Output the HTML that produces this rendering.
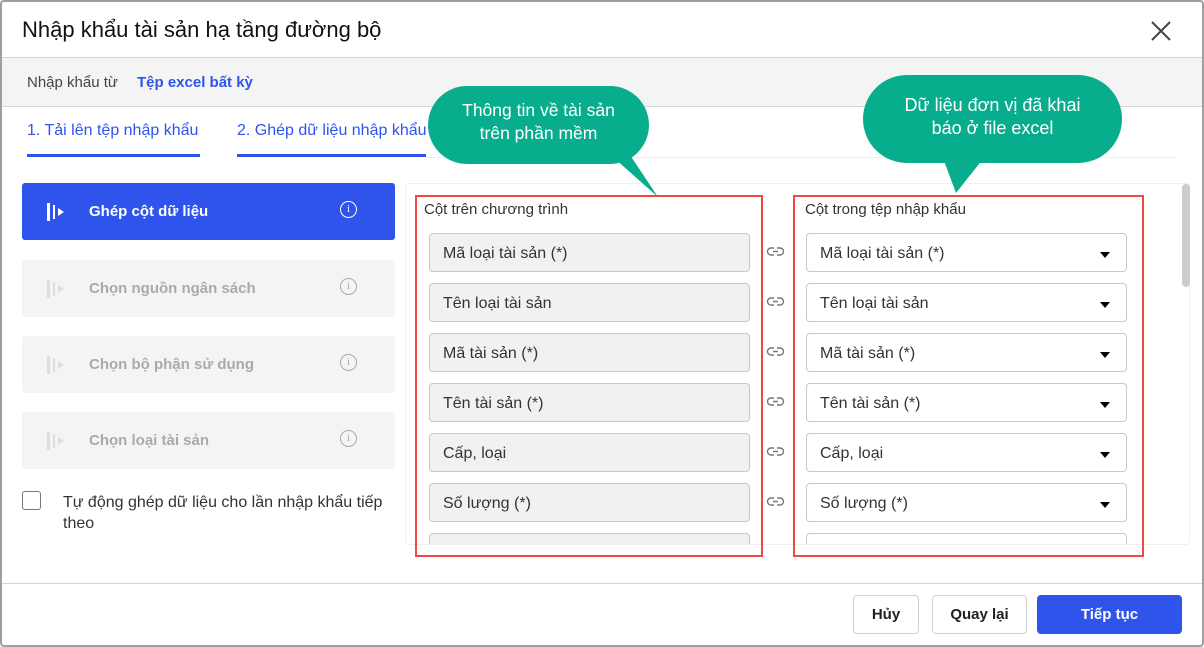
<!DOCTYPE html>
<html><head><meta charset="utf-8"><style>
*{box-sizing:border-box;margin:0;padding:0}
body{width:1204px;height:647px;overflow:hidden;background:#fff;font-family:"Liberation Sans",Roboto,sans-serif;position:relative;color:#212121}
.frame{position:absolute;left:0;top:0;width:1204px;height:647px;border:2px solid #9e9e9e;border-radius:4px}
.abs{position:absolute}
.title{left:22px;top:17px;font-size:22px;color:#111}
.gray{left:2px;top:57px;width:1200px;height:50px;background:#f4f4f4;border-top:1px solid #d6d6d6;border-bottom:1px solid #d6d6d6}
.tab{font-size:16px;color:#2f54eb;top:122px}
.ul{height:3px;background:#2f54eb;top:154px}
.step{left:22px;width:373px;height:57px;background:#f4f4f4;border-radius:3px;color:#aaa;font-weight:bold;font-size:15px}
.step span{position:absolute;left:67px;top:20px}
.step .ico{position:absolute;left:25px;top:19px}
.step .info{position:absolute;left:318px;top:18px;width:17px;height:17px;border:1.3px solid #aaa;border-radius:50%;font-size:11px;text-align:center;line-height:15px;font-weight:normal;font-family:"Liberation Serif",serif}
.fld{height:39px;border:1px solid #c8c8c8;border-radius:4px;font-size:16px;color:#333;padding:11px 13px 0}
.l{left:429px;width:321px;background:#f1f1f1}
.r{left:806px;width:321px;background:#fff}
.r::after{content:"";position:absolute;right:16px;top:18px;border-left:5px solid transparent;border-right:5px solid transparent;border-top:6px solid #000}
.btn{top:595px;height:39px;border:1px solid #d0d0d0;border-radius:4px;font-size:15px;font-weight:bold;text-align:center;line-height:37px;background:#fff}
.bub{background:#08ad8d;color:#fff;text-align:center;line-height:23px}
</style></head><body>
<div class="frame"></div>
<div class="abs title">Nhập khẩu tài sản hạ tầng đường bộ</div>
<svg class="abs" style="left:1151px;top:21px" width="20" height="20"><path d="M1 1L19 19M19 1L1 19" stroke="#444" stroke-width="2"/></svg>
<div class="abs gray"></div>
<div class="abs" style="left:27px;top:74px;font-size:15px;color:#444">Nhập khẩu từ</div>
<div class="abs" style="left:137px;top:74px;font-size:15px;color:#2f54eb;font-weight:bold">Tệp excel bất kỳ</div>
<div class="abs tab" style="left:27px">1. Tải lên tệp nhập khẩu</div>
<div class="abs tab" style="left:237px">2. Ghép dữ liệu nhập khẩu</div>
<div class="abs ul" style="left:27px;width:173px"></div>
<div class="abs ul" style="left:237px;width:189px"></div>
<div class="abs" style="left:426px;top:157px;width:750px;height:1px;background:#eee"></div>

<div class="abs step" style="top:183px;background:#2f54eb;color:#fff"><svg class="ico" width="22" height="20"><rect x="0" y="1" width="3" height="18" fill="#fff"/><rect x="6" y="3" width="2" height="14" fill="#fff"/><path d="M11 6L17 10L11 14Z" fill="#fff"/></svg><span>Ghép cột dữ liệu</span><div class="info" style="border-color:#fff">i</div></div>
<div class="abs step" style="top:260px"><svg class="ico" width="22" height="20"><rect x="0" y="1" width="3" height="18" fill="#ddd"/><rect x="6" y="3" width="2" height="14" fill="#ddd"/><path d="M11 6L17 10L11 14Z" fill="#ddd"/></svg><span>Chọn nguồn ngân sách</span><div class="info">i</div></div>
<div class="abs step" style="top:336px"><svg class="ico" width="22" height="20"><rect x="0" y="1" width="3" height="18" fill="#ddd"/><rect x="6" y="3" width="2" height="14" fill="#ddd"/><path d="M11 6L17 10L11 14Z" fill="#ddd"/></svg><span>Chọn bộ phận sử dụng</span><div class="info">i</div></div>
<div class="abs step" style="top:412px"><svg class="ico" width="22" height="20"><rect x="0" y="1" width="3" height="18" fill="#ddd"/><rect x="6" y="3" width="2" height="14" fill="#ddd"/><path d="M11 6L17 10L11 14Z" fill="#ddd"/></svg><span>Chọn loại tài sản</span><div class="info">i</div></div>
<div class="abs" style="left:22px;top:491px;width:19px;height:19px;border:1px solid #777;border-radius:3px"></div>
<div class="abs" style="left:63px;top:492px;font-size:16px;line-height:21px;color:#333;width:335px">Tự động ghép dữ liệu cho lần nhập khẩu tiếp theo</div>

<div class="abs" style="left:405px;top:183px;width:785px;height:362px;border:1px solid #eee;border-radius:4px"></div>
<div class="abs" style="left:1182px;top:184px;width:8px;height:103px;background:#ccc;border-radius:4px"></div>
<div class="abs" style="left:406px;top:184px;width:775px;height:360px;overflow:hidden">
 <div style="position:relative;left:-406px;top:-184px">
 <div class="abs fld l" style="top:233px">Mã loại tài sản (*)</div>
 <div class="abs fld l" style="top:283px">Tên loại tài sản</div>
 <div class="abs fld l" style="top:333px">Mã tài sản (*)</div>
 <div class="abs fld l" style="top:383px">Tên tài sản (*)</div>
 <div class="abs fld l" style="top:433px">Cấp, loại</div>
 <div class="abs fld l" style="top:483px">Số lượng (*)</div>
 <div class="abs fld l" style="top:533px"></div>
 <div class="abs fld r" style="top:233px">Mã loại tài sản (*)</div>
 <div class="abs fld r" style="top:283px">Tên loại tài sản</div>
 <div class="abs fld r" style="top:333px">Mã tài sản (*)</div>
 <div class="abs fld r" style="top:383px">Tên tài sản (*)</div>
 <div class="abs fld r" style="top:433px">Cấp, loại</div>
 <div class="abs fld r" style="top:483px">Số lượng (*)</div>
 <div class="abs fld r" style="top:533px"></div>
 </div>
</div>
<svg class="abs" style="left:766px;top:240px" width="20" height="280" fill="none" stroke="#777" stroke-width="1.4">
<g id="k"><path d="M8 8H5a3.5 3.5 0 0 0 0 7h3M11 8h3a3.5 3.5 0 0 1 0 7h-3M7 11.5h5"/></g>
<use href="#k" y="50"/><use href="#k" y="100"/><use href="#k" y="150"/><use href="#k" y="200"/><use href="#k" y="250"/>
</svg>
<div class="abs" style="left:415px;top:195px;width:348px;height:362px;border:2px solid #f04747"></div>
<div class="abs" style="left:793px;top:195px;width:351px;height:362px;border:2px solid #f04747"></div>
<div class="abs" style="left:424px;top:201px;font-size:15px;color:#333">Cột trên chương trình</div>
<div class="abs" style="left:805px;top:201px;font-size:15px;color:#333">Cột trong tệp nhập khẩu</div>

<svg class="abs" style="left:0;top:0" width="1204" height="647">
<path d="M605 150L658 197L630 155Z" fill="#08ad8d"/>
<path d="M990 150L956 193L940 150Z" fill="#08ad8d"/>
</svg>
<div class="abs bub" style="left:428px;top:86px;width:221px;height:78px;border-radius:39px;padding-top:13px;font-size:17.5px">Thông tin về tài sản<br>trên phần mềm</div>
<div class="abs bub" style="left:863px;top:75px;width:259px;height:88px;border-radius:44px;padding-top:19px;font-size:18px">Dữ liệu đơn vị đã khai<br>báo ở file excel</div>

<div class="abs" style="left:2px;top:583px;width:1200px;height:1px;background:#d6d6d6"></div>
<div class="abs btn" style="left:853px;width:66px">Hủy</div>
<div class="abs btn" style="left:932px;width:95px">Quay lại</div>
<div class="abs btn" style="left:1037px;width:145px;background:#2f54eb;border-color:#2f54eb;color:#fff">Tiếp tục</div>
</body></html>
